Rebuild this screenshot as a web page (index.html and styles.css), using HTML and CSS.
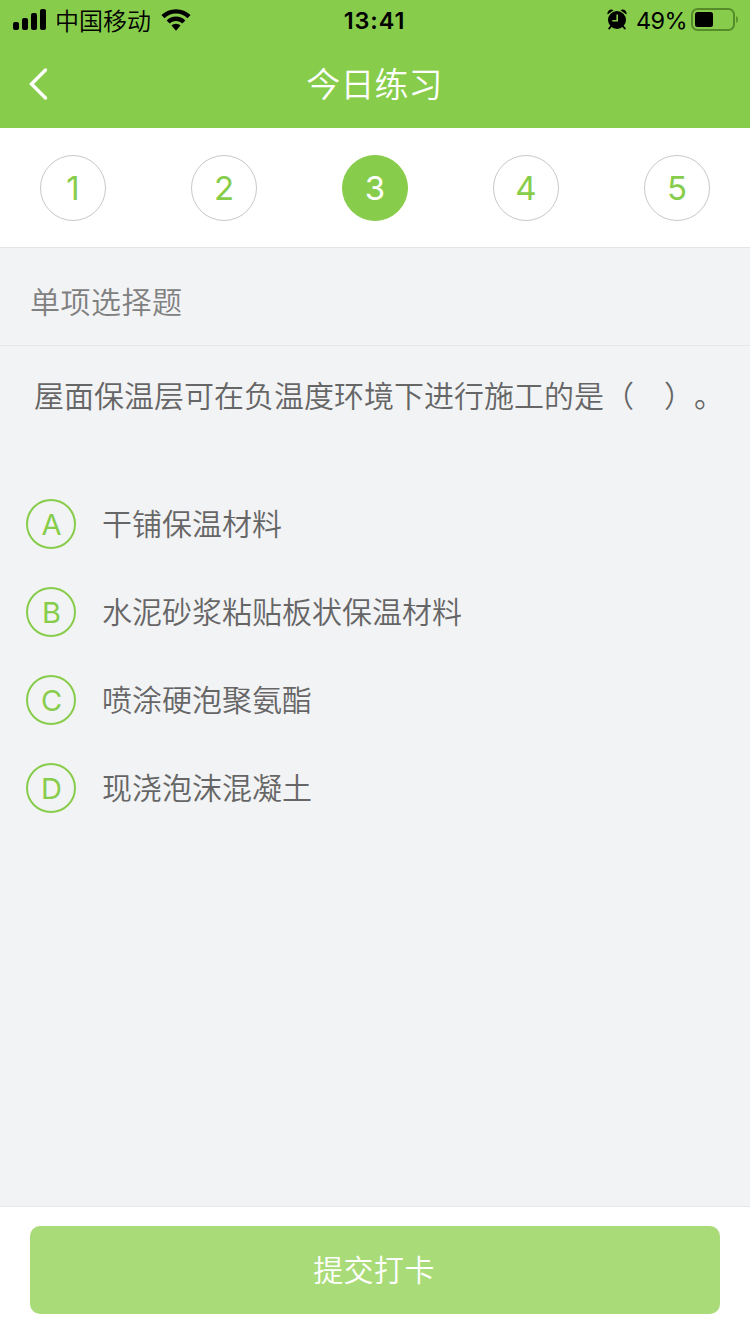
FILE: index.html
```html
<!DOCTYPE html>
<html lang="zh-CN">
<head>
<meta charset="utf-8">
<title>今日练习</title>
<link rel="stylesheet" href="styles.css">
</head>
<body>
<div class="app">
  <header class="header">
    <div class="status">
      <div class="status-left">
        <svg class="signal" width="34" height="22" viewBox="0 0 34 22">
          <rect x="0" y="13" width="6" height="8" rx="2"/>
          <rect x="9" y="9" width="6" height="12" rx="2"/>
          <rect x="18" y="4" width="6" height="17" rx="2"/>
          <rect x="27" y="0" width="6" height="21" rx="2"/>
        </svg>
        <span class="carrier">中国移动</span>
        <svg class="wifi" width="30" height="22" viewBox="0 0 30 22">
          <path d="M15 .2C9.300 .2 4.200 2.400 .4 6L3.500 9.200C6.500 6.300 10.500 4.600 15 4.600S23.500 6.300 26.500 9.200L29.600 6C25.800 2.400 20.700 .2 15 .2Z"/>
          <path d="M15 7.600C11.300 7.600 8 9 5.600 11.400L8.700 14.500C10.300 12.900 12.500 11.900 15 11.900S19.700 12.900 21.300 14.500L24.400 11.400C22 9 18.700 7.600 15 7.600Z"/>
          <path d="M15 14.800C13.200 14.800 11.700 15.500 10.500 16.600L15 21.800L19.500 16.600C18.300 15.500 16.800 14.800 15 14.800Z"/>
        </svg>
      </div>
      <div class="clock">13:41</div>
      <div class="status-right">
        <svg class="alarm" width="20" height="22" viewBox="0 0 20 22">
          <circle cx="10" cy="11" r="9"/>
          <path d="M.6 5.600C-.4 2.400 3 -.8 6.500 1.200ZM19.400 5.600C20.400 2.400 17 -.8 13.500 1.200Z"/>
          <path class="alarm-feet" d="M4.200 17L2.200 19.500M15.800 17L17.800 19.500"/>
          <path class="alarm-hands" d="M10.200 5.500V11.700H5.300"/>
        </svg>
        <span class="percent">49%</span>
        <svg class="battery" width="48" height="24" viewBox="0 0 48 24">
          <rect class="battery-shell" x="1" y="1" width="42" height="21" rx="5.500"/>
          <rect x="4" y="4" width="18" height="15" rx="2.500"/>
          <path class="battery-tip" d="M45.200 8C47.500 9 47.500 14 45.200 15Z"/>
        </svg>
      </div>
    </div>
    <nav class="nav">
      <svg class="back" width="22" height="34" viewBox="0 0 22 34"><path d="M17.500 3L3.500 17L17.500 31"/></svg>
      <h1 class="title">今日练习</h1>
    </nav>
  </header>

  <div class="steps">
    <span class="step">1</span>
    <span class="step">2</span>
    <span class="step step-active">3</span>
    <span class="step">4</span>
    <span class="step">5</span>
  </div>

  <h2 class="kind">单项选择题</h2>

  <main class="main">
    <p class="question">屋面保温层可在负温度环境下进行施工的是（　）。</p>
    <ul class="options">
      <li class="option"><span class="mark">A</span><span class="label">干铺保温材料</span></li>
      <li class="option"><span class="mark">B</span><span class="label">水泥砂浆粘贴板状保温材料</span></li>
      <li class="option"><span class="mark">C</span><span class="label">喷涂硬泡聚氨酯</span></li>
      <li class="option"><span class="mark">D</span><span class="label">现浇泡沫混凝土</span></li>
    </ul>
  </main>

  <footer class="footer"><button class="submit">提交打卡</button></footer>
</div>
</body>
</html>
```
FILE: styles.css
```css
* { box-sizing: border-box; margin: 0; padding: 0; }

body {
  font-family: Inter, "Noto Sans CJK SC", sans-serif;
  font-weight: 350;
  background: #f2f3f5;
}

.app { display: flex; flex-direction: column; width: 750px; height: 1334px; }

.header { height: 128px; background: #87cd4b; }

.status {
  display: grid;
  grid-template-columns: 1fr auto 1fr;
  align-items: center;
  height: 40px;
  padding: 0 11px 0 13px;
  color: #000;
}

.status-left, .status-right { display: flex; align-items: center; height: 40px; }
.status-right { justify-content: flex-end; }
.carrier { height: 40px; margin: 0 10px 0 8px; font-size: 24px; line-height: 39px; font-family: "Noto Sans CJK SC", sans-serif; font-weight: 350; }
.clock { height: 40px; margin-right: 3px; font-size: 23.5px; font-weight: 590; letter-spacing: 0.9px; line-height: 42px; }
.percent { height: 40px; margin: 0 4px 0 9px; font-size: 23.5px; font-weight: 380; letter-spacing: -0.6px; line-height: 42px; }
.alarm-feet { fill: none; stroke: #000; stroke-width: 2; stroke-linecap: round; }
.alarm-hands { fill: none; stroke: #87cd4b; stroke-width: 1.6; }
.battery-shell { fill: none; stroke: #558b29; stroke-width: 2; }
.battery-tip { fill: #558b29; }

.nav {
  display: grid;
  grid-template-columns: 80px 1fr 80px;
  align-items: center;
  height: 88px;
}
.back { margin-left: 28px; fill: none; stroke: #fff; stroke-width: 3.4; stroke-linecap: round; }
.title { height: 88px; padding: 1px 1px 0 0; text-align: center; color: #fff; font-size: 34px; letter-spacing: 0.1px; line-height: 87px; font-weight: 350; }

.steps {
  display: flex;
  justify-content: space-between;
  align-items: center;
  height: 120px;
  padding: 0 40px;
  background: #fff;
  border-bottom: 1px solid #e4e4e6;
}
.step {
  width: 66px;
  height: 66px;
  border: 1px solid #c8c8cc;
  border-radius: 50%;
  color: #87cd4b;
  font-size: 33px;
  font-weight: 380;
  line-height: 65px;
  text-align: center;
}
.step-active { background: #87cd4b; border-color: #87cd4b; color: #fff; }

.kind {
  height: 98px;
  padding-left: 30px;
  border-bottom: 1px solid #e6e7e9;
  color: #808080;
  font-size: 30px;
  font-weight: 350;
  letter-spacing: 0.5px;
  line-height: 108px;
}

.main { flex: 1; padding: 27px 0 0 26px; color: #666; font-size: 30px; }
.question { padding-left: 8px; line-height: 46px; white-space: nowrap; text-spacing-trim: space-all; }
.options { display: flex; flex-direction: column; gap: 38px; margin-top: 80px; list-style: none; }
.option { display: flex; align-items: center; gap: 26px; height: 50px; }
.mark {
  width: 50px;
  height: 50px;
  padding-left: 1px;
  border: 2px solid #87cd4b;
  border-radius: 50%;
  color: #87cd4b;
  font-size: 29px;
  font-weight: 380;
  line-height: 48px;
  text-align: center;
}
.label { line-height: 50px; }

.footer { height: 128px; padding: 19px 30px 0; background: #fff; border-top: 1px solid #e6e7e9; }
.submit {
  display: block;
  width: 100%;
  height: 88px;
  padding: 0 2px 0 0;
  border: 0;
  border-radius: 10px;
  background: #a9dc79;
  color: #fff;
  font: 350 30px/88px Inter, "Noto Sans CJK SC", sans-serif;
  letter-spacing: 0.4px;
}
```
